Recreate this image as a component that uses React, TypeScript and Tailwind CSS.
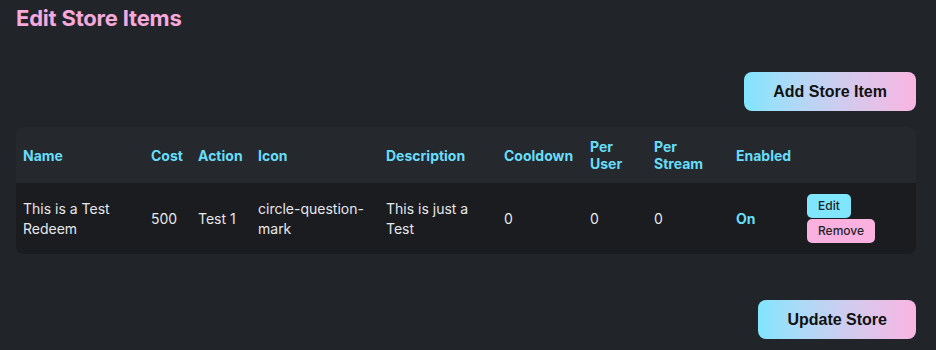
import React from "react";

interface StoreItem {
  name: string;
  cost: number;
  action: string;
  icon: string;
  description: string;
  cooldown: number;
  perUser: number;
  perStream: number;
  enabled: boolean;
}

const items: StoreItem[] = [
  {
    name: "This is a Test Redeem",
    cost: 500,
    action: "Test 1",
    icon: "circle-question-mark",
    description: "This is just a Test",
    cooldown: 0,
    perUser: 0,
    perStream: 0,
    enabled: true,
  },
];

const headers: { label: React.ReactNode; w: string }[] = [
  { label: "Name", w: "w-[128px]" },
  { label: "Cost", w: "w-[47px]" },
  { label: "Action", w: "w-[60px]" },
  { label: "Icon", w: "w-[128px]" },
  { label: "Description", w: "w-[118px]" },
  { label: "Cooldown", w: "w-[86px]" },
  { label: <>Per<br />User</>, w: "w-[64px]" },
  { label: <>Per<br />Stream</>, w: "w-[82px]" },
  { label: "Enabled", w: "w-[71px]" },
  { label: "", w: "w-[116px]" },
];

const GradientButton = ({ children }: { children: React.ReactNode }) => (
  <button className="h-[39px] px-[29px] rounded-lg bg-gradient-to-r from-[#80e5ff] to-[#f9b5e2] text-[#111] font-bold text-base font-['Liberation_Sans',Arial,sans-serif]">
    {children}
  </button>
);

export default function App() {
  return (
    <div className="min-h-[350px] bg-[#212529] pl-4 pr-5 pt-[4px] font-['Inter',sans-serif] text-[#e6e8eb]">
      <h1 className="text-[22px] leading-7 font-bold tracking-[-0.2px] text-[#f7a9dc]">Edit Store Items</h1>

      <div className="flex justify-end mt-[40px]">
        <GradientButton>Add Store Item</GradientButton>
      </div>

      <div className="mt-4 rounded-lg bg-[#25282c] overflow-hidden">
        <table className="w-full table-fixed border-collapse text-sm">
          <thead>
            <tr className="h-[56px]">
              {headers.map((h, i) => (
                <th
                  key={i}
                  className={`${h.w} px-[7px] text-left align-middle font-bold leading-[17px] text-[#67def9]`}
                >
                  {h.label}
                </th>
              ))}
            </tr>
          </thead>
          <tbody>
            {items.map((item, i) => (
              <tr key={i} className="h-[71px] bg-[#1a1c20]">
                <td className="px-[7px] leading-5">{item.name}</td>
                <td className="px-[7px]">{item.cost}</td>
                <td className="px-[7px]">{item.action}</td>
                <td className="px-[7px] leading-5">{item.icon}</td>
                <td className="px-[7px] leading-5">{item.description}</td>
                <td className="px-[7px]">{item.cooldown}</td>
                <td className="px-[7px]">{item.perUser}</td>
                <td className="px-[7px]">{item.perStream}</td>
                <td className="px-[7px] font-bold text-[#67def9]">
                  {item.enabled ? "On" : "Off"}
                </td>
                <td className="px-[7px]">
                  <div className="flex flex-col items-start gap-px">
                    <button className="h-6 px-[11px] rounded-[5px] bg-[#7fe6fe] text-xs font-medium text-[#1f2328]">
                      Edit
                    </button>
                    <button className="h-6 px-[11px] rounded-[5px] bg-[#fbb1df] text-xs font-medium text-[#1f2328]">
                      Remove
                    </button>
                  </div>
                </td>
              </tr>
            ))}
          </tbody>
        </table>
      </div>

      <div className="flex justify-end mt-[46px]">
        <GradientButton>Update Store</GradientButton>
      </div>
    </div>
  );
}
